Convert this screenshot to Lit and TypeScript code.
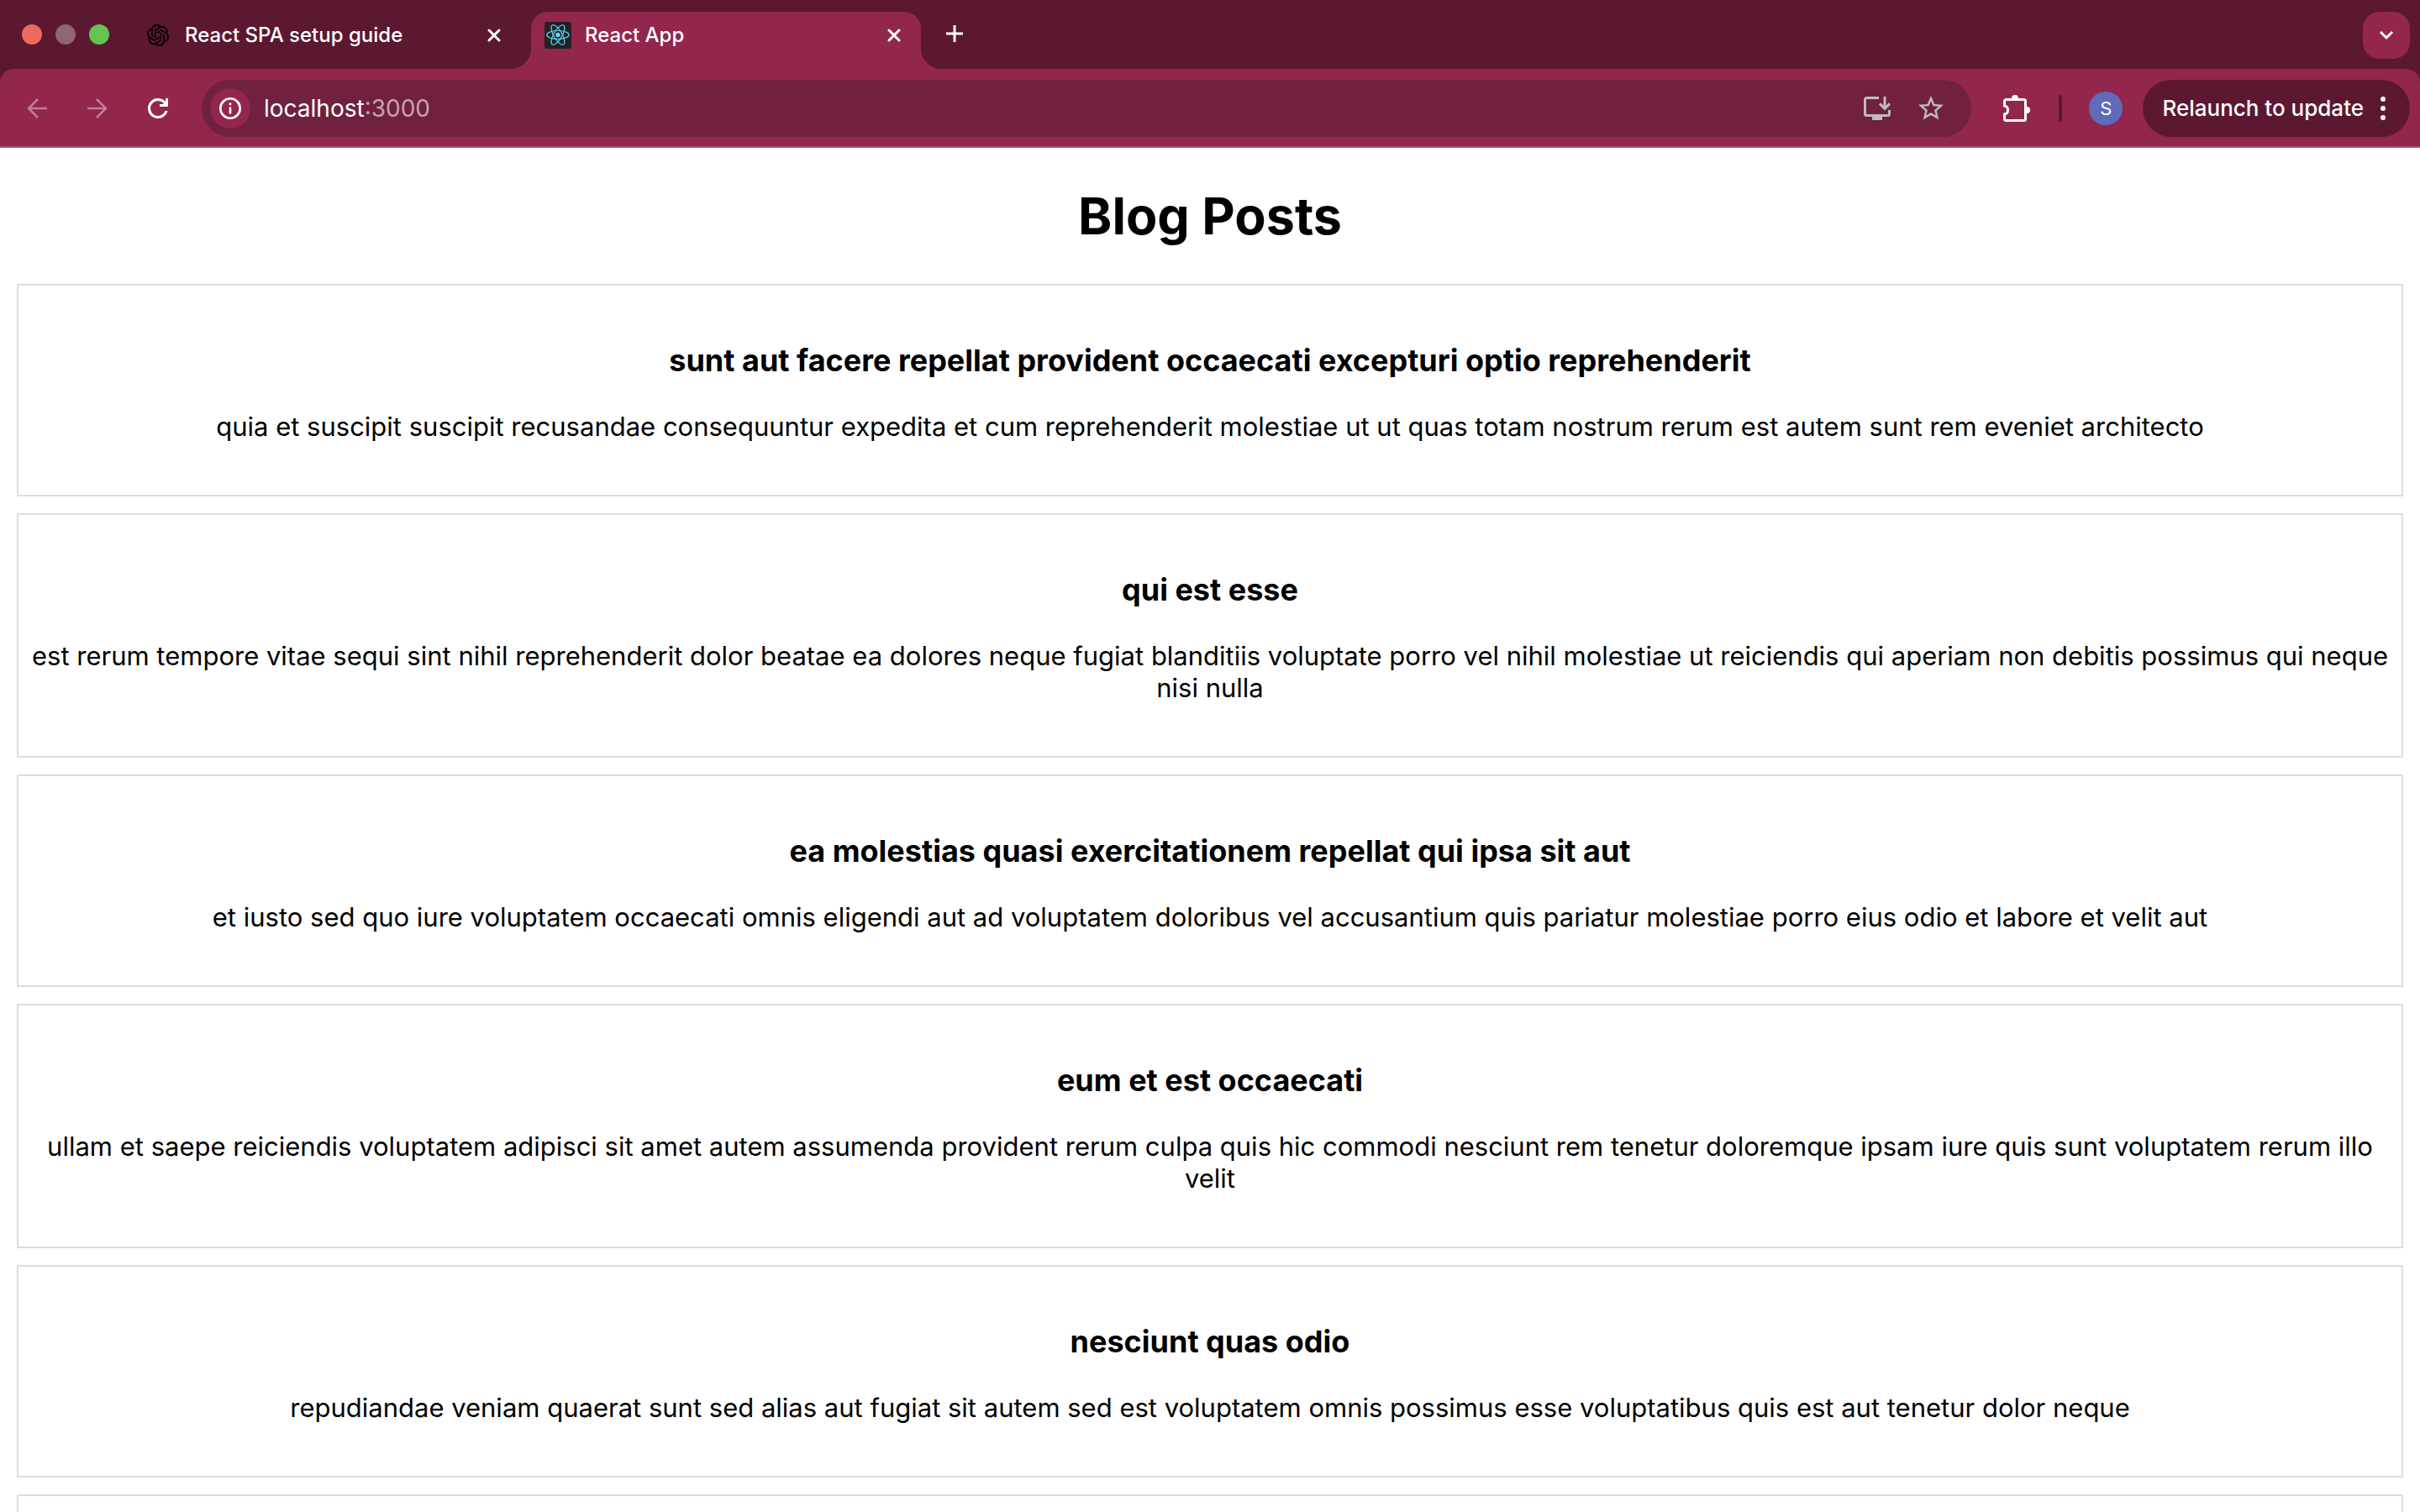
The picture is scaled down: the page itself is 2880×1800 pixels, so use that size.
import { LitElement, html, css, svg } from "lit";
import { customElement, property } from "lit/decorators.js";

interface Post {
  title: string;
  body: string;
}

const posts: Post[] = [
  {
    title: "sunt aut facere repellat provident occaecati excepturi optio reprehenderit",
    body: "quia et suscipit suscipit recusandae consequuntur expedita et cum reprehenderit molestiae ut ut quas totam nostrum rerum est autem sunt rem eveniet architecto",
  },
  {
    title: "qui est esse",
    body: "est rerum tempore vitae sequi sint nihil reprehenderit dolor beatae ea dolores neque fugiat blanditiis voluptate porro vel nihil molestiae ut reiciendis qui aperiam non debitis possimus qui neque nisi nulla",
  },
  {
    title: "ea molestias quasi exercitationem repellat qui ipsa sit aut",
    body: "et iusto sed quo iure voluptatem occaecati omnis eligendi aut ad voluptatem doloribus vel accusantium quis pariatur molestiae porro eius odio et labore et velit aut",
  },
  {
    title: "eum et est occaecati",
    body: "ullam et saepe reiciendis voluptatem adipisci sit amet autem assumenda provident rerum culpa quis hic commodi nesciunt rem tenetur doloremque ipsam iure quis sunt voluptatem rerum illo velit",
  },
  {
    title: "nesciunt quas odio",
    body: "repudiandae veniam quaerat sunt sed alias aut fugiat sit autem sed est voluptatem omnis possimus esse voluptatibus quis est aut tenetur dolor neque",
  },
];

const closeIcon = svg`<svg width="16" height="16" viewBox="0 0 16 16" fill="none" stroke="currentColor" stroke-width="3" stroke-linecap="round"><path d="M2 2l12 12M14 2L2 14"/></svg>`;

const knotIcon = svg`<svg width="26" height="26" viewBox="0 0 24 24" fill="#000"><path d="M22.2819 9.8211a5.9847 5.9847 0 0 0-.5157-4.9108 6.0462 6.0462 0 0 0-6.5098-2.9A6.0651 6.0651 0 0 0 4.9807 4.1818a5.9847 5.9847 0 0 0-3.9977 2.9 6.0462 6.0462 0 0 0 .7427 7.0966 5.98 5.98 0 0 0 .511 4.9107 6.051 6.051 0 0 0 6.5146 2.9001A5.9847 5.9847 0 0 0 13.2599 24a6.0557 6.0557 0 0 0 5.7718-4.2058 5.9894 5.9894 0 0 0 3.9977-2.9001 6.0557 6.0557 0 0 0-.7475-7.0729zm-9.022 12.6081a4.4755 4.4755 0 0 1-2.8764-1.0408l.1419-.0804 4.7783-2.7582a.7948.7948 0 0 0 .3927-.6813v-6.7369l2.02 1.1686a.071.071 0 0 1 .038.052v5.5826a4.504 4.504 0 0 1-4.4945 4.4944zm-9.6607-4.1254a4.4708 4.4708 0 0 1-.5346-3.0137l.142.0852 4.783 2.7582a.7712.7712 0 0 0 .7806 0l5.8428-3.3685v2.3324a.0804.0804 0 0 1-.0332.0615L9.74 19.9502a4.4992 4.4992 0 0 1-6.1408-1.6464zM2.3408 7.8956a4.485 4.485 0 0 1 2.3655-1.9728V11.6a.7664.7664 0 0 0 .3879.6765l5.8144 3.3543-2.0201 1.1685a.0757.0757 0 0 1-.071 0l-4.8303-2.7865A4.504 4.504 0 0 1 2.3408 7.872zm16.5963 3.8558L13.1038 8.364 15.1192 7.2a.0757.0757 0 0 1 .071 0l4.8303 2.7913a4.4944 4.4944 0 0 1-.6765 8.1042v-5.6772a.79.79 0 0 0-.407-.667zm2.0107-3.0231l-.142-.0852-4.7735-2.7818a.7759.7759 0 0 0-.7854 0L9.409 9.2297V6.8974a.0662.0662 0 0 1 .0284-.0615l4.8303-2.7866a4.4992 4.4992 0 0 1 6.6802 4.66zM8.3065 12.863l-2.02-1.1638a.0804.0804 0 0 1-.038-.0567V6.0742a4.4992 4.4992 0 0 1 7.3757-3.4537l-.142.0805L8.704 5.459a.7948.7948 0 0 0-.3927.6813zm1.0976-2.3654l2.602-1.4998 2.6069 1.4998v2.9994l-2.5974 1.4997-2.6067-1.4997Z"/></svg>`;

const atomIcon = svg`<svg width="32" height="32" viewBox="0 0 32 32"><rect width="32" height="32" rx="3" fill="#222"/><g fill="none" stroke="#61dafb" stroke-width="1.2"><ellipse cx="16" cy="15.5" rx="13.2" ry="5"/><ellipse cx="16" cy="15.5" rx="13.2" ry="5" transform="rotate(60 16 15.5)"/><ellipse cx="16" cy="15.5" rx="13.2" ry="5" transform="rotate(120 16 15.5)"/></g><circle cx="16" cy="15.5" r="2.7" fill="#61dafb"/></svg>`;

const plusIcon = svg`<svg width="20" height="20" viewBox="0 0 20 20" fill="none" stroke="currentColor" stroke-width="3"><path d="M10 0v20M0 10h20"/></svg>`;

const chevronIcon = svg`<svg width="18" height="12" viewBox="0 0 18 12" fill="none" stroke="currentColor" stroke-width="3"><path d="M2 2l7 7 7-7"/></svg>`;

const backIcon = svg`<svg width="24" height="24" viewBox="0 0 24 24" fill="none" stroke="currentColor" stroke-width="2.6"><path d="M24 12H2M13 1L2 12l11 11"/></svg>`;

const forwardIcon = svg`<svg width="24" height="24" viewBox="0 0 24 24" fill="none" stroke="currentColor" stroke-width="2.6"><path d="M0 12h22M11 1l11 11-11 11"/></svg>`;

const reloadIcon = svg`<svg width="36" height="36" viewBox="0 0 24 24" fill="currentColor"><path d="M12 20q-3.35 0-5.675-2.325T4 12q0-3.35 2.325-5.675T12 4q1.725 0 3.3.713T18 6.75V4h2v6.6h-6.6V8.6h3.9q-.9-1.2-2.288-1.8T12 6Q9.5 6 7.75 7.75T6 12q0 2.5 1.75 4.25T12 18q1.925 0 3.475-1.1T17.65 14h2.1q-.7 2.65-2.85 4.325T12 20Z"/><path d="M15.6 8.8L18.2 6.2V8.8Z"/></svg>`;

const infoIcon = svg`<svg width="26" height="26" viewBox="0 0 26 26"><circle cx="13" cy="13" r="11.7" fill="none" stroke="currentColor" stroke-width="2.6"/><path d="M11.7 11.4h2.6v8h-2.6zM11.7 6.6h2.6v2.6h-2.6z" fill="currentColor"/></svg>`;

const installIcon = svg`<svg width="32" height="28" viewBox="0 0 32 28" fill="none" stroke="currentColor" stroke-width="3"><path d="M18 1.5H3.5a2 2 0 0 0-2 2v17a2 2 0 0 0 2 2h25a2 2 0 0 0 2-2V16"/><path d="M25 0v14M19 8.4l6 6 6-6"/><path d="M10 23h12v5H10z" fill="currentColor" stroke="none"/></svg>`;

const starIcon = svg`<svg width="36" height="36" viewBox="0 0 24 24" fill="currentColor"><path d="M22 9.24l-7.19-.62L12 2 9.19 8.63 2 9.24l5.46 4.73L5.82 21 12 17.27 18.18 21l-1.63-7.03L22 9.24zM12 15.4l-3.76 2.27 1-4.28-3.32-2.88 4.38-.38L12 6.1l1.71 4.04 4.38.38-3.32 2.88 1 4.28L12 15.4z"/></svg>`;

const puzzleIcon = svg`<svg width="32" height="32" viewBox="0 0 32 32"><path d="M1.5 12.9V7.5a2 2 0 0 1 2-2h21a2 2 0 0 1 2 2v21a2 2 0 0 1-2 2h-21a2 2 0 0 1-2-2V23.1c2.6-.4 4-2.4 4-5.1s-1.4-4.700-4-5.100z" fill="none" stroke="currentColor" stroke-width="3"/><path d="M10 5V4a4 4 0 0 1 8 0v1zM27 14h1a4 4 0 0 1 0 8h-1z" fill="currentColor"/></svg>`;

const dotsIcon = svg`<svg width="6" height="28" viewBox="0 0 6 28" fill="currentColor"><circle cx="3" cy="3" r="3"/><circle cx="3" cy="14" r="3"/><circle cx="3" cy="25" r="3"/></svg>`;

const controls = css`
  :host,
  * {
    box-sizing: border-box;
  }
  button {
    display: flex;
    align-items: center;
    justify-content: center;
    padding: 0;
    border: 0;
    background: none;
    color: inherit;
    font: inherit;
  }
  svg {
    display: block;
    flex: none;
  }
`;

@customElement("tab-strip")
export class TabStrip extends LitElement {
  static styles = [
    controls,
    css`
      :host {
        display: flex;
        height: 82px;
        padding: 14px 12px 0 26px;
        color: #fff;
        font-size: 24px;
        line-height: 28px;
      }
      .lights {
        display: flex;
        gap: 16px;
        height: 54px;
        align-items: center;
        margin-right: 28px;
      }
      .light {
        width: 24px;
        height: 24px;
        border-radius: 50%;
      }
      .red {
        background: #ed6a5e;
      }
      .grey {
        background: #8e6676;
      }
      .green {
        background: #62c554;
      }
      .tab {
        position: relative;
        display: flex;
        align-items: center;
        width: 464px;
        padding: 0 24px 12px 16px;
        font-weight: 500;
      }
      .tab.idle {
        width: 474px;
        padding: 0 36px 12px 14px;
      }
      .tab.active {
        background: #92264d;
        border-radius: 20px 20px 0 0;
      }
      .tab.active::before,
      .tab.active::after {
        content: "";
        position: absolute;
        bottom: 0;
        width: 24px;
        height: 24px;
      }
      .tab.active::before {
        right: 100%;
        background: radial-gradient(circle at 0 0, transparent 24px, #92264d 24px);
      }
      .tab.active::after {
        left: 100%;
        background: radial-gradient(circle at 100% 0, transparent 24px, #92264d 24px);
      }
      .icon {
        width: 32px;
        display: flex;
        justify-content: center;
      }
      .title {
        flex: 1;
        margin-left: 16px;
        white-space: nowrap;
      }
      .new {
        width: 56px;
        height: 52px;
        margin-left: 12px;
      }
      .search {
        width: 56px;
        height: 56px;
        margin-left: auto;
        border-radius: 20px;
        background: #92264d;
      }
    `,
  ];

  render() {
    return html`
      <div class="lights">
        <button class="light red" aria-label="Close window"></button>
        <button class="light grey" aria-label="Minimise window"></button>
        <button class="light green" aria-label="Zoom window"></button>
      </div>
      <div class="tab idle">
        <span class="icon">${knotIcon}</span>
        <span class="title">React SPA setup guide</span>
        <button aria-label="Close tab">${closeIcon}</button>
      </div>
      <div class="tab active">
        <span class="icon">${atomIcon}</span>
        <span class="title">React App</span>
        <button aria-label="Close tab">${closeIcon}</button>
      </div>
      <button class="new" aria-label="New tab">${plusIcon}</button>
      <button class="search" aria-label="Search tabs">${chevronIcon}</button>
    `;
  }
}

@customElement("tool-bar")
export class ToolBar extends LitElement {
  static styles = [
    controls,
    css`
      :host {
        display: flex;
        align-items: center;
        height: 94px;
        padding: 12px 12px 12px 20px;
        border-radius: 16px 16px 0 0;
        background: #92264d;
        box-shadow: inset 0 -2px #ad5478;
        color: #fff;
        font-size: 26px;
        line-height: 32px;
      }
      .nav {
        display: flex;
        gap: 24px;
        margin-right: 28px;
      }
      .nav button {
        width: 48px;
        height: 48px;
      }
      .nav button:disabled {
        color: #c47a98;
      }
      .address {
        flex: 1;
        display: flex;
        align-items: center;
        height: 68px;
        padding: 0 30px 0 10px;
        border-radius: 34px;
        background: #70213f;
        font-size: 28px;
      }
      .site {
        width: 48px;
        height: 48px;
        margin-right: 16px;
        border-radius: 50%;
        background: #92264d;
      }
      .host {
        field-sizing: content;
        padding: 0;
        border: 0;
        outline: 0;
        background: none;
        color: #fff;
        font: inherit;
      }
      .port {
        flex: 1;
        color: #c5a2b0;
      }
      .page-actions {
        display: flex;
        align-items: center;
        gap: 30px;
        color: #bdbdbd;
      }
      .extensions {
        margin: 0 34px 0 38px;
      }
      .divider {
        width: 4px;
        height: 32px;
        border-radius: 2px;
        background: #5c1830;
      }
      .avatar {
        width: 40px;
        height: 40px;
        margin: 0 24px 0 32px;
        border-radius: 50%;
        background: #5f6bb9;
        font-size: 22px;
      }
      .update {
        gap: 20px;
        height: 68px;
        padding: 0 29px 0 23px;
        border-radius: 34px;
        background: #5c1830;
        font-weight: 500;
        white-space: nowrap;
      }
    `,
  ];

  render() {
    return html`
      <nav class="nav">
        <button disabled aria-label="Back">${backIcon}</button>
        <button disabled aria-label="Forward">${forwardIcon}</button>
        <button aria-label="Reload">${reloadIcon}</button>
      </nav>
      <div class="address">
        <button class="site" aria-label="View site information">${infoIcon}</button>
        <input class="host" type="text" aria-label="Address" spellcheck="false" .value=${"localhost"} />
        <span class="port">:3000</span>
        <div class="page-actions">
          <button aria-label="Install app">${installIcon}</button>
          <button aria-label="Bookmark this page">${starIcon}</button>
        </div>
      </div>
      <button class="extensions" aria-label="Extensions">${puzzleIcon}</button>
      <span class="divider"></span>
      <button class="avatar">S</button>
      <button class="update">Relaunch to update ${dotsIcon}</button>
    `;
  }
}

@customElement("blog-post")
export class BlogPost extends LitElement {
  @property({ attribute: false }) post?: Post;

  static styles = css`
    :host {
      display: block;
      box-sizing: border-box;
      min-height: 253px;
      padding: 30px 12px;
      border: 2px solid #ddd;
    }
    h3 {
      margin: 37px 0 38px;
      font-size: 36px;
      line-height: 44px;
    }
    p {
      margin: 0 0 32px;
      font-size: 31px;
      line-height: 38px;
    }
  `;

  render() {
    return this.post ? html`<h3>${this.post.title}</h3><p>${this.post.body}</p>` : null;
  }
}

@customElement("app-root")
export class AppRoot extends LitElement {
  static styles = css`
    :host {
      display: block;
      height: 100vh;
      overflow: hidden;
      background: #fff;
      color: #000;
      font-family: Inter, "Liberation Sans", sans-serif;
    }
    .chrome {
      background: #5c1830;
    }
    .page {
      display: flex;
      flex-direction: column;
      gap: 20px;
      padding: 43px 20px 20px;
      text-align: center;
    }
    h1 {
      margin: 0 0 23px;
      font-size: 61px;
      line-height: 76px;
    }
  `;

  render() {
    return html`
      <header class="chrome">
        <tab-strip></tab-strip>
        <tool-bar></tool-bar>
      </header>
      <main class="page">
        <h1>Blog Posts</h1>
        ${posts.map((post) => html`<blog-post .post=${post}></blog-post>`)}
        <blog-post></blog-post>
      </main>
    `;
  }
}
